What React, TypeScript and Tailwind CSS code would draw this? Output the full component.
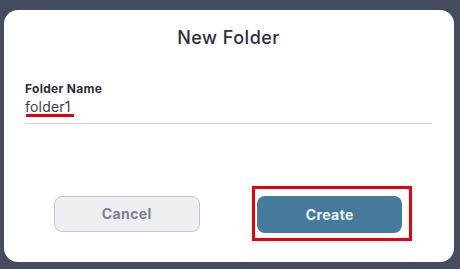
export default function App() {
  return (
    <main
      className="w-[460px] h-[269px] bg-[#464c5f] pt-[10px] pl-[4px] overflow-hidden"
      style={{ fontFamily: "Inter, 'Open Sans', sans-serif" }}
    >
      <div className="w-[450px] h-[252px] bg-white rounded-[14px] pt-[14px] pl-[21px] pr-[22px]">
        <h1 className="text-center text-[18px] leading-[28px] font-medium tracking-[0.5px] text-[#2a2f3b]">
          New Folder
        </h1>

        <div className="mt-[29px]">
          <label className="block text-[12px] leading-[16px] font-bold tracking-[0.3px] text-[#2a2f3b]">
            Folder Name
          </label>
          <div className="relative h-[27px] border-b border-[#cfd1d6]">
            <span className="block text-[14px] leading-[20px] tracking-[0.2px] text-[#3a3f4a]">
              folder1
            </span>
            <div className="absolute left-[1px] top-[17px] w-[48px] h-[3px] bg-[#e00010]" />
          </div>
        </div>

        <div className="grid grid-cols-2 items-center mt-[62px]">
          <button className="justify-self-center w-[146px] h-[36px] rounded-[8px] bg-[#efeff3] border border-[#c3c6d2] text-[14px] font-bold tracking-[0.4px] text-[#7b8193]">
            Cancel
          </button>
          <div className="justify-self-center ml-[4px] border-[3px] border-[#e8000d] pt-[7px] pb-[5px] pl-[2px] pr-[7px]">
            <button className="w-[145px] h-[37px] rounded-[8px] bg-[#477b9c] text-[14px] font-bold tracking-[0.4px] text-[#eef3f7]">
              Create
            </button>
          </div>
        </div>
      </div>
    </main>
  );
}
